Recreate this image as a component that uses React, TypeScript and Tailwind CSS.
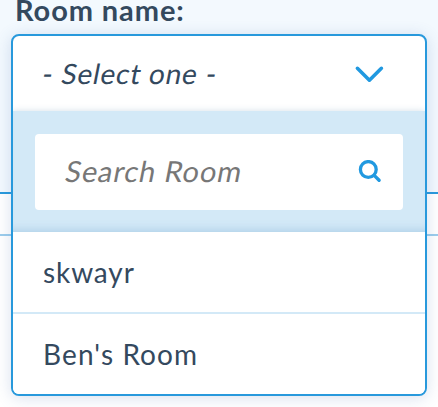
const rooms = [
  { name: "skwayr", className: "tracking-[0.9px]" },
  { name: "Ben's Room", className: "tracking-[1.1px]" },
];

function Chevron() {
  return (
    <svg className="h-5 w-8" viewBox="0 0 32 20" fill="none" stroke="#2199e0" strokeWidth="3.6" strokeLinecap="round" strokeLinejoin="round">
      <path d="M4.4 4.3 16.4 16.2 28.4 4.3" />
    </svg>
  );
}

function SearchIcon() {
  return (
    <svg className="size-6" viewBox="0 0 24 24" fill="none" stroke="#2199e0" strokeLinecap="round">
      <circle cx="10.3" cy="9.5" r="7.9" strokeWidth="3.3" />
      <path d="m16.2 15.4 4.9 4.9" strokeWidth="3.4" />
    </svg>
  );
}

function RoomSelect() {
  return (
    <div className="absolute top-[34px] left-[11px] w-[416px] overflow-hidden rounded-[8px] border-2 border-[#2899dc] bg-white text-[28px] leading-[40px] shadow-[0_2px_16px_rgba(60,100,170,0.2)]">
      <div className="flex h-[75px] items-center justify-between pt-px pr-[40px] pl-[30px]">
        <span className="-mt-[2px] -skew-x-[11deg] tracking-[0.8px]">- Select one -</span>
        <Chevron />
      </div>
      <div className="h-[121px] bg-[#d3e9f7] px-[22px] pt-[23px] shadow-[0_0_6px_rgba(60,110,150,0.22),inset_0_-10px_10px_-8px_rgba(90,150,200,0.3)]">
        <div className="flex h-[76px] items-center justify-between rounded-[4px] bg-white pr-[21px] pl-[31px]">
          <span className="-mt-[3px] -skew-x-[11deg] text-[29px] tracking-[0.9px] text-[#777777]">Search Room</span>
          <SearchIcon />
        </div>
      </div>
      <ul className="relative divide-y-2 divide-[#d3e9f7] bg-white">
        {rooms.map((room) => (
          <li key={room.name} className="flex h-[82px] items-center pl-[30px] last:h-[80px]">
            <span className={room.className}>{room.name}</span>
          </li>
        ))}
      </ul>
    </div>
  );
}

export default function App() {
  return (
    <div className="relative h-[407px] w-[438px] overflow-hidden bg-white font-[Lato,sans-serif] text-[#34495e]">
      <div className="h-[194px] border-b-2 border-[#2899dc] bg-[#f3f9fe]">
        <h2 className="pl-[15px] text-[29px] leading-[19px] font-bold tracking-[0.9px] whitespace-nowrap">Room name:</h2>
      </div>
      <div className="h-[42px] border-b-2 border-[#9ccdec]" />
      <RoomSelect />
    </div>
  );
}
